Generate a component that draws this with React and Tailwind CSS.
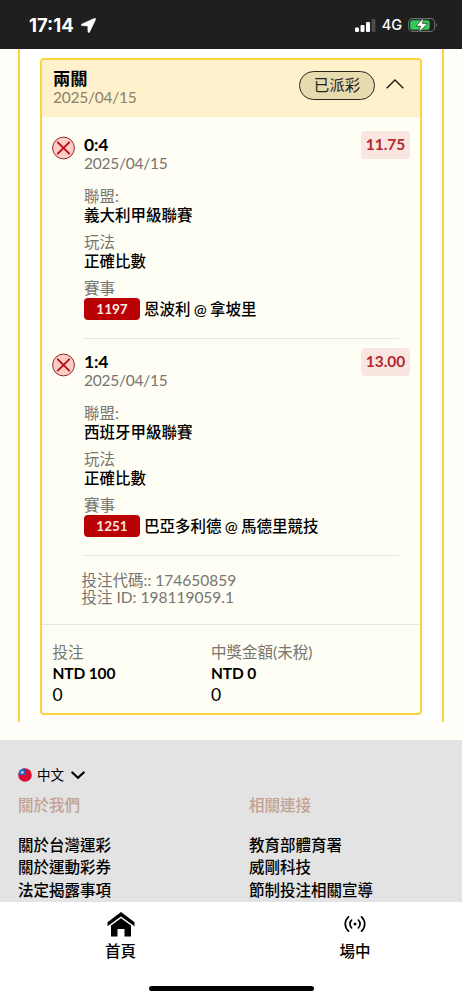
import React, { useState } from "react";

const legs = [
  {
    id: "1197",
    score: "0:4",
    date: "2025/04/15",
    odds: "11.75",
    league: "義大利甲級聯賽",
    market: "正確比數",
    match: "恩波利 @ 拿坡里",
  },
  {
    id: "1251",
    score: "1:4",
    date: "2025/04/15",
    odds: "13.00",
    league: "西班牙甲級聯賽",
    market: "正確比數",
    match: "巴亞多利德 @ 馬德里競技",
  },
];

const footerColumns = [
  { title: "關於我們", links: ["關於台灣運彩", "關於運動彩券", "法定揭露事項"] },
  { title: "相關連接", links: ["教育部體育署", "威剛科技", "節制投注相關宣導"] },
];

const StatusBar = () => (
  <div className="flex h-[49px] items-center bg-[#1f1f1f] pt-[2px] pl-[29px] pr-[24px] font-['Inter','Liberation_Sans',sans-serif] text-white">
    <span className="w-[47px] text-[18.5px] leading-none font-bold">17:14</span>
    <svg width="15" height="15" viewBox="0 0 15 15" className="ml-[5px]" fill="white">
      <path d="M13.4.3.8 6C-.2 6.500 0 7.700 1.200 7.800l5.500.2.2 5.600c.1 1.300 1.300 1.400 1.800.3L14.700 1.500c.4-.9-.3-1.600-1.300-1.200z" stroke="white" strokeWidth=".4" />
    </svg>
    <svg width="21" height="13" viewBox="0 0 21 13" className="ml-auto" fill="white">
      <rect x="0" y="8.500" width="4" height="4.500" rx="1.200" />
      <rect x="5.500" y="6" width="4" height="7" rx="1.200" />
      <rect x="11" y="3" width="4" height="10" rx="1.200" />
      <rect x="16.500" y="0" width="4" height="13" rx="1.200" fill="#4b4b4b" />
    </svg>
    <span className="ml-[6px] text-[14.500px] leading-none font-medium">4G</span>
    <svg width="30" height="16" viewBox="0 0 30 16" className="ml-[6px] -mt-[1px]">
      <rect x=".6" y="1.600" width="26" height="12.800" rx="4" fill="none" stroke="#6e6e6e" strokeWidth="1.100" />
      <rect x="2.200" y="3.200" width="19.500" height="9.600" rx="2.500" fill="#32c85a" />
      <path d="M28 6v4c1.300-.5 1.300-3.500 0-4z" fill="#6e6e6e" />
      <path d="M15.800.6 8 9.100h4.600L10.800 15.400l8.700-8.900h-5.200z" fill="white" stroke="#1f1f1f" strokeWidth=".6" />
    </svg>
  </div>
);

const LostIcon = () => (
  <svg width="24" height="24" viewBox="0 0 24 24" fill="none">
    <circle cx="11.500" cy="12" r="10.900" fill="#fbcdc6" stroke="#8e2a2a" strokeWidth="1" />
    <path d="M5.800 6.300l11.400 11.400M17.200 6.300L5.800 17.700" stroke="#b90f14" strokeWidth="1.900" strokeLinecap="round" />
  </svg>
);

const Field = ({ label, children }) => (
  <div className="mb-[9px]">
    <p className="h-[18px] leading-[18px] text-[#77756f]">{label}</p>
    <div className="h-[19px] leading-[20px] font-medium text-black">{children}</div>
  </div>
);

const Leg = ({ leg }) => (
  <div className="flex h-[217px] pt-[14px] pl-[10px] pr-[10px]">
    <LostIcon />
    <div className="ml-[8px] flex flex-1 flex-col">
      <div className="flex justify-between">
        <div>
          <p className="h-[18px] text-[17.500px] leading-[18px] font-bold tracking-[-0.200px] text-black">{leg.score}</p>
          <p className="h-[18px] leading-[18px] tracking-[-0.250px] text-[#77756f]">{leg.date}</p>
        </div>
        <span className="-mt-[5px] flex h-[28px] w-[49px] items-center justify-center rounded bg-[#f9e6e1] text-[15.500px] font-bold text-[#b5272d]">
          {leg.odds}
        </span>
      </div>
      <div className="mt-[15px]">
        <Field label="聯盟:">{leg.league}</Field>
        <Field label="玩法">{leg.market}</Field>
        <p className="h-[19px] leading-[18px] text-[#77756f]">賽事</p>
        <div className="flex h-[22px] items-center font-medium text-black">
          <span className="mr-[4px] flex h-[22px] w-[56px] items-center justify-center rounded bg-[#b90005] text-[13.500px] font-bold text-[#fbe9e0]">
            {leg.id}
          </span>
          <span className="pt-[2px] [word-spacing:-0.7px]">{leg.match}</span>
        </div>
      </div>
      <div className="mt-auto mr-[11px] ml-[-1px] border-b-[1.500px] border-[#e8e6e0]" />
    </div>
  </div>
);

const Total = ({ label, amount }) => (
  <div className="w-[158.500px]">
    <p className="h-[21px] leading-[21px] whitespace-nowrap text-[#77756f]">{label}</p>
    <p className="h-[21px] leading-[21px] font-bold tracking-[-0.150px] text-black">{amount}</p>
    <p className="h-[21px] text-[17.500px] leading-[21px] text-black">0</p>
  </div>
);

const BetCard = () => {
  const [open, setOpen] = useState(true);

  return (
    <div className="mx-[20px] h-[657px] overflow-hidden rounded-[4px] border-2 border-[#fbd33c] bg-[#fffef5]">
      <div className="flex h-[57px] items-center bg-[#fff1cb] pl-[11px] pr-[16px]">
        <div className="-mt-[3px]">
          <p className="h-[19px] text-[17.300px] leading-[19px] font-bold text-black">兩關</p>
          <p className="h-[18px] leading-[18px] tracking-[-0.250px] text-[#8a826d]">2025/04/15</p>
        </div>
        <span className="-mt-[6px] ml-auto flex h-[29px] w-[76px] items-center justify-center rounded-full border border-[#2b261c] bg-[#e6daaf] text-[#25231d]">
          已派彩
        </span>
        <button onClick={() => setOpen(!open)} className="-mt-[9px] ml-[11px]">
          <svg width="18" height="10" viewBox="0 0 18 10" fill="none" stroke="#1f1b12" strokeWidth="1.400">
            <path d={open ? "M.7 9.300 9 1l8.300 8.300" : "M.7 1 9 9.300 17.300 1"} />
          </svg>
        </button>
      </div>
      {open && (
        <>
          <div className="pt-[5px]">
            {legs.map((leg) => (
              <Leg key={leg.id} leg={leg} />
            ))}
          </div>
          <div className="h-[68px] pt-[16px] pl-[39.500px] leading-[17px] text-[#77756f]">
            <p className="h-[17px]">投注代碼:: 174650859</p>
            <p className="h-[17px]">投注 ID: 198119059.1</p>
          </div>
        </>
      )}
      <div className="flex border-t border-[#e8e6e0] pt-[17px] pl-[10.500px]">
        <Total label="投注" amount="NTD 100" />
        <Total label="中獎金額(未稅)" amount="NTD 0" />
      </div>
    </div>
  );
};

const Footer = () => (
  <div className="h-[162px] bg-[#e3e3e3] pt-[24px] pl-[18px]">
    <div className="flex h-[22px] items-center text-[13.500px] text-black">
      <svg width="14" height="14" viewBox="0 0 14 14">
        <circle cx="7" cy="7" r="6.800" fill="#dc0b32" />
        <path d="M7 .2A6.800 6.800 0 0 0 .2 7H7z" fill="#2460b5" />
        <circle cx="4.300" cy="4.300" r="1.500" fill="#a9ccf0" />
      </svg>
      <span className="ml-[5px]">中文</span>
      <svg width="14" height="9" viewBox="0 0 14 9" className="ml-[7px] mt-[1px]" fill="none" stroke="black" strokeWidth="2.200">
        <path d="M1.300 1.500l5.700 5.300 5.700-5.300" strokeLinecap="round" />
      </svg>
    </div>
    <div className="mt-[8px] flex">
      {footerColumns.map((column) => (
        <div key={column.title} className="w-[231px] shrink-0 font-medium">
          <p className="mb-[18px] h-[22px] leading-[22px] text-[#c2a293]">{column.title}</p>
          {column.links.map((link) => (
            <p key={link} className="h-[22.300px] leading-[22px] text-black">{link}</p>
          ))}
        </div>
      ))}
    </div>
  </div>
);

const BottomNav = () => (
  <div className="flex h-[98px] flex-col items-center bg-white">
    <div className="flex w-[471px] shrink-0 translate-x-[6px] font-medium text-black">
      <div className="flex w-[236px] flex-col items-center pl-[2px]">
        <svg width="28" height="25" viewBox="0 0 28 25" className="mt-[10px]" fill="black">
          <path d="M14 0 .5 10.300V14.200L14 4.500l13.500 9.700v-3.900z" />
          <path d="M14 6.300 4 13.500V24.500h6.500V17h7v7.500H24V13.500z" />
        </svg>
        <span className="mt-[3px] leading-[22px]">首頁</span>
      </div>
      <div className="flex w-[235px] flex-col items-center">
        <svg width="22" height="18" viewBox="0 0 22 18" className="mt-[13px]" fill="none" stroke="black" strokeWidth="1.700" strokeLinecap="round">
          <path d="M4.500 1.800C.2 5.800.2 12.200 4.500 16.200M7.600 5.200c-2.200 2.200-2.200 5.400 0 7.600M14.400 5.200c2.200 2.200 2.200 5.400 0 7.600M17.500 1.800c4.300 4 4.300 10.400 0 14.400" />
          <circle cx="11" cy="9" r="1.500" fill="black" stroke="none" />
        </svg>
        <span className="mt-[7px] leading-[22px]">場中</span>
      </div>
    </div>
    <div className="mt-auto mb-[9px] h-[5px] w-[165px] rounded-full bg-black" />
  </div>
);

const App = () => (
  <div className="h-[1000px] w-[462px] overflow-hidden bg-[#fffef8] font-['Lato','Noto_Sans_CJK_TC',sans-serif] text-[15.500px]">
    <StatusBar />
    <div className="h-[691px]">
      <div className="mx-[18px] h-[673px] border-x-2 border-[#fbd33c] bg-white pt-[9px]">
        <BetCard />
      </div>
    </div>
    <Footer />
    <BottomNav />
  </div>
);

export default App;
